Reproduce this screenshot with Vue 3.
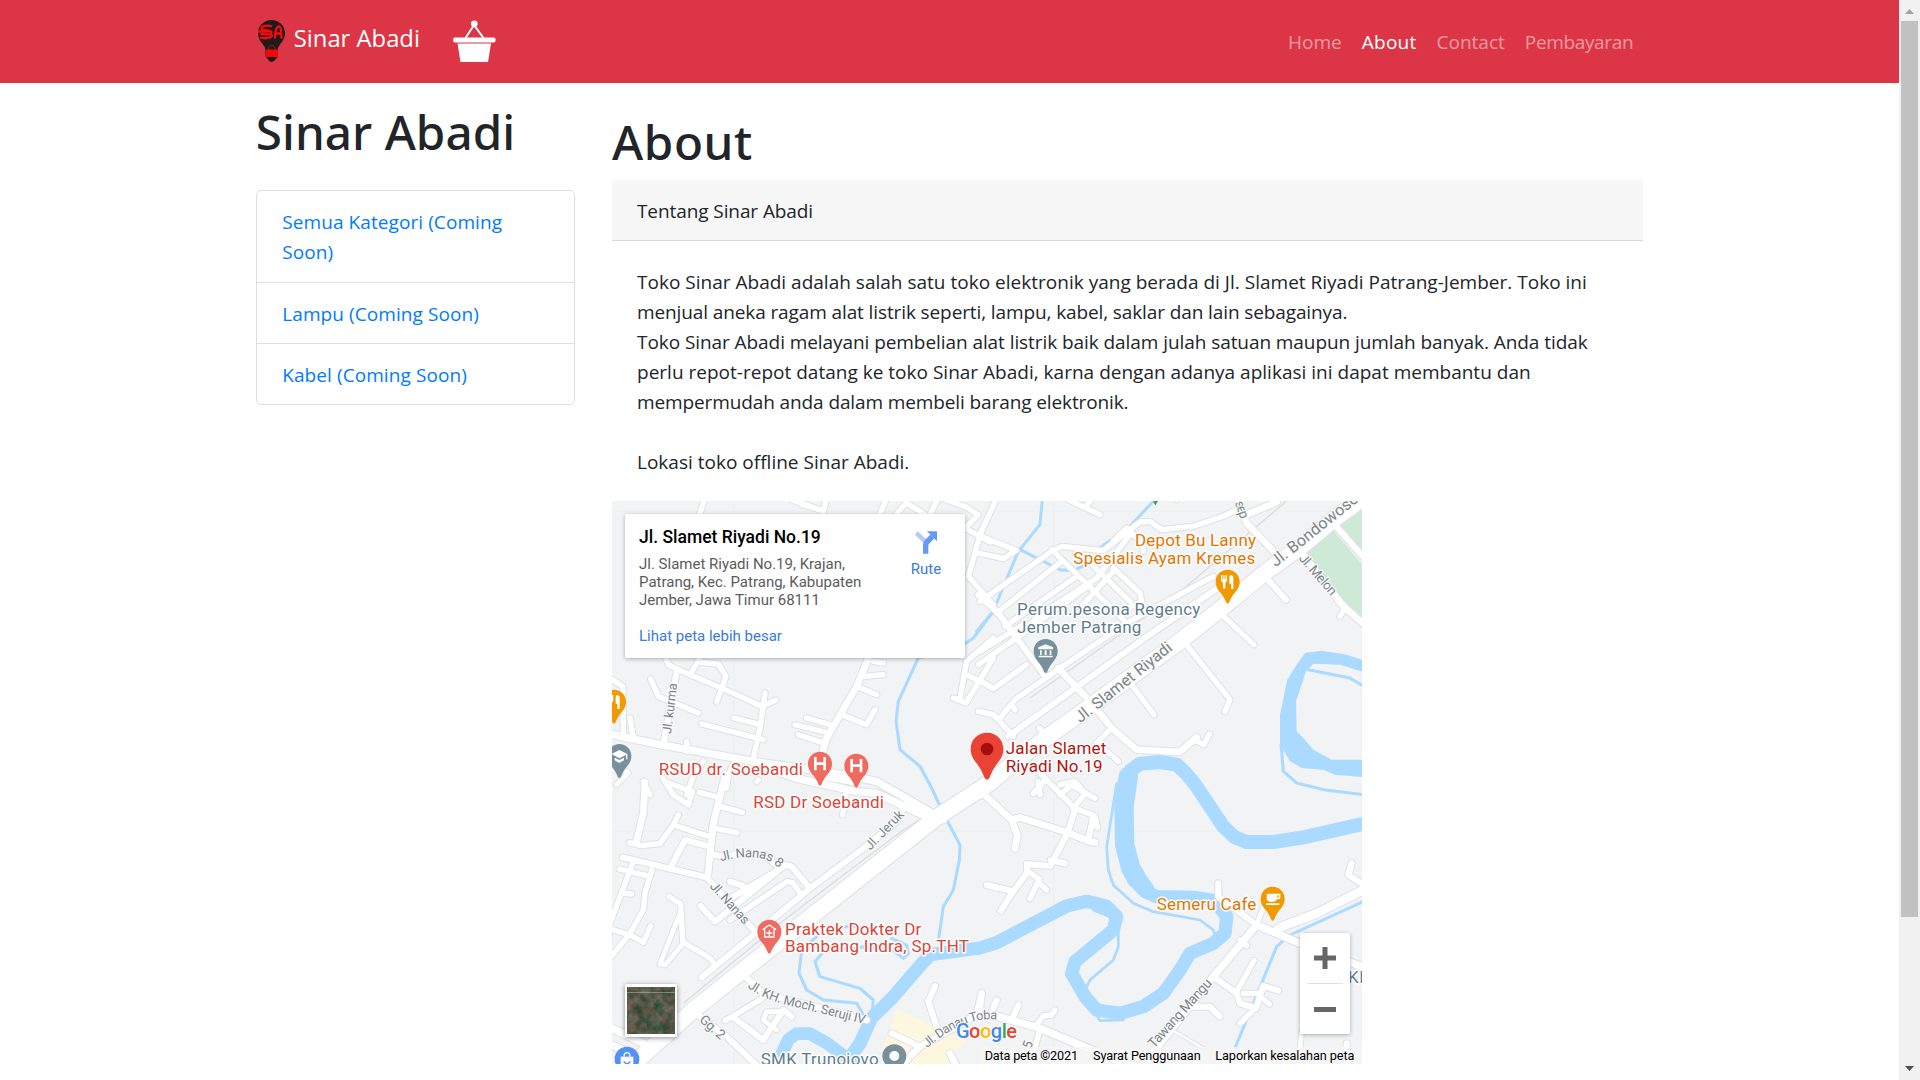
<script setup>
const categories = ['Semua Kategori (Coming Soon)', 'Lampu (Coming Soon)', 'Kabel (Coming Soon)']
const links = [
  { label: 'Home' },
  { label: 'About', active: true },
  { label: 'Contact' },
  { label: 'Pembayaran', tight: true }
]

// Streets are grouped by map tile; each entry is [width, path].
const tiles = [
  {
    x: 0, y: 0,
    roads: [
      [16, 'M285 0L262 70'], [16, 'M545 5L640 40L650 0'], [14, 'M560 5L575 20L640 38'], [16, 'M830 0L805 60'],
      [16, 'M900 0L850 60M890 15L960 60M985 0L960 50'], [16, 'M995 0L1070 28L1105 50L1065 90L1140 132'],
      [16, 'M1115 95L1075 235L1150 320'], [16, 'M165 475L175 500L205 515L380 590L455 625L497 607'],
      [16, 'M240 530L270 480M262 492L325 498L348 535L320 612'], [18, 'M200 520L160 740'],
      [16, 'M122 543L145 595L265 645'], [16, 'M465 585L450 690L428 790'], [16, 'M372 660L450 680M275 678L460 725'],
      [22, 'M-10 706L150 740L430 790L700 830L800 850L1000 965'], [16, 'M230 730L230 760M60 660L70 720'],
      [16, 'M0 540L38 565L40 700M-10 600L20 600'], [20, 'M775 480L755 530L740 565L650 720L630 790'],
      [16, 'M790 490L820 495M765 535L820 530M740 565L800 590'], [16, 'M695 650L770 680L795 635'],
      [16, 'M590 660L660 680M555 680L655 705M565 710L640 735'],
      [16, 'M1150 420L1070 490L1050 600M1070 530L1150 570M1150 480L1068 615L1030 600'],
      [16, 'M120 890L100 850M230 890L252 830L280 790M350 870L355 830L375 790'], [14, 'M20 800L55 825L20 860']
    ]
  },
  {
    x: 1110, y: 0,
    roads: [
      [48, 'M-5 880L190 725L310 640L600 430L740 318L860 220L960 148L1060 65L1175 -20'],
      [16, 'M50 0L0 110M-5 165L70 182L108 157L-5 112'], [16, 'M0 310L215 160L245 145L370 158L480 72L510 70L545 95L640 85L730 55L780 30'],
      [16, 'M50 345L245 190M75 385L290 235M-5 500L110 420L330 260M-5 545L40 572L140 500'], [16, 'M0 460L130 380'],
      [18, 'M-5 290L55 345L195 535'], [16, 'M215 155L430 365M290 155L450 310'], [16, 'M100 425L180 350L350 240L450 110M300 330L400 220'],
      [16, 'M400 210L480 285L485 310L415 345'], [16, 'M60 660L105 605L240 510L440 375L700 235'],
      [18, 'M85 715L300 560L480 430L725 262'], [16, 'M-5 640L40 650L100 715M95 620L105 635'],
      [20, 'M235 510L330 610L395 690L470 755L600 762L650 718'], [16, 'M640 725L672 740L688 708'],
      [16, 'M390 695L350 735L415 790'], [16, 'M178 690L210 725'], [16, 'M455 560L522 650'],
      [16, 'M615 435L750 605L735 640'], [16, 'M720 345L822 440'], [18, 'M850 230L918 305'],
      [20, 'M770 -5L800 75L895 175M945 140L1090 325L1170 395'], [16, 'M1095 330L1080 355'], [18, 'M1060 75L1170 200'],
      [20, 'M800 50L890 12'], [16, 'M265 5L360 50M340 -5L318 25M590 5L600 -5'], [16, 'M440 90L490 140L490 160M440 90L400 130'],
      [16, 'M180 890L175 850M240 860L285 850L310 880']
    ]
  },
  {
    x: 0, y: 846,
    roads: [
      [48, 'M1240 -75L1140 8L980 112L400 570L250 690L50 870'], [18, 'M275 592L430 465L600 325L760 205L860 125L885 75'],
      [22, 'M470 -35L560 -5L740 35L800 40L975 122'], [20, 'M640 -10L730 5'], [16, 'M710 30L698 105'],
      [20, 'M345 -10L310 130L293 290'], [16, 'M268 37L325 52M320 77L398 97M305 143L380 158'],
      [16, 'M205 105L190 135L300 170M190 135L150 190L95 197L58 188'], [20, 'M105 8L100 100L78 190'],
      [16, 'M160 -5L190 45L235 75L247 35L165 5'], [18, 'M38 232L290 292L440 460'],
      [18, 'M180 265L225 180L300 200M300 222L350 232L400 215L470 230L510 265'], [16, 'M28 267L110 287'],
      [16, 'M70 245L0 430L-10 560M125 270L105 340L100 390L60 460L-5 540M45 340L65 342M-5 445L60 465L100 487L122 438'],
      [16, 'M178 350L212 372L218 485L300 535L315 555'], [14, 'M212 395L150 552L165 555L220 490'],
      [18, 'M272 378L315 425L500 275M370 350L530 255L545 260L600 325M360 305L400 318'],
      [16, 'M360 420L530 305L548 308L575 345M490 415L600 325'], [18, 'M400 585L460 640L770 720'],
      [16, 'M345 722L450 660L470 640'], [18, 'M370 712L460 780L520 690L545 710'], [14, 'M515 695L470 695L460 720L500 750'],
      [18, 'M250 695L350 770L450 865'], [22, 'M-5 740L120 800M-5 790L60 820'], [20, 'M870 860L930 800L1110 700'],
      [18, 'M845 760L925 798'], [18, 'M975 618L955 665L980 740'], [18, 'M1115 640L1100 700'], [20, 'M1020 820L1045 870'],
      [16, 'M440 5L445 0M1130 315L1160 325']
    ]
  },
  {
    x: 1110, y: 846,
    roads: [
      [20, 'M0 32L95 120L112 165L105 205M95 120L118 112L255 155L330 185L345 187'],
      [16, 'M160 40L192 5M180 -20L285 85L345 108L352 142M240 45L275 15L345 55M280 85L312 45'],
      [18, 'M285 90L260 165L210 258L140 252M340 110L325 180M212 240L255 250'],
      [18, 'M142 255L140 280L92 345L62 393M20 315L92 332'], [16, 'M145 275L178 297L150 355M178 310L200 330'],
      [22, 'M50 708L180 745L360 820L480 870'], [18, 'M5 640L0 690M50 660L35 695M115 675L95 720'],
      [16, 'M165 740L190 708L215 705L225 690M178 755L150 860'], [22, 'M830 435L700 590L500 840'],
      [18, 'M715 310L715 350L830 435'], [22, 'M830 435L960 490L1160 565'], [14, 'M855 370L830 435'],
      [26, 'M885 455L905 440L1010 400L1160 325'], [18, 'M1115 250L1105 285L1160 320'], [16, 'M780 480L800 497'],
      [18, 'M700 590L770 640L780 670L828 685L850 618L895 632'], [16, 'M770 635L822 542M825 685L780 730M840 650L868 672M790 640L840 640'],
      [18, 'M640 680L690 680L720 710'], [7, 'M585 755L670 805'], [14, 'M965 755L955 860'], [18, 'M1100 790L1100 860']
    ]
  }
]

const rivers = [
  [9, 'M1150 340L1090 420L1060 440L925 480L865 610L858 670L870 755L930 805L965 870L1000 946L1050 1041L1048 1086L1030 1176L1000 1226L985 1330'],
  [9, 'M1297 5L1290 80L1225 160L1170 290L1150 340L1100 400M1230 155L1350 215L1390 218L1450 190M1625 15L1550 95L1460 155'],
  [9, 'M2095 515L2220 540L2270 570M2013 740L2020 820L2060 855L2140 875L2260 890'],
  [42, 'M2270 975L2170 998L2080 1018L1990 1032L1910 1032L1875 1018L1840 986L1800 926L1760 866L1730 828L1700 800L1650 792L1590 797L1562 818L1545 856'],
  [58, 'M1555 835L1542 926L1544 1040L1562 1110L1580 1140'],
  [48, 'M1562 1110L1610 1175'],
  [40, 'M1570 1145L1605 1180L1640 1196L1750 1198L1815 1208L1850 1256L1845 1306L1810 1336L1740 1366L1710 1416L1660 1486L1600 1526L1530 1546L1460 1536L1425 1496L1385 1426L1395 1391L1510 1296L1520 1256L1490 1225L1430 1210L1370 1224L1270 1276L1160 1334L1110 1350L960 1370L920 1415L850 1496L785 1560L750 1636L715 1685'],
  [38, 'M505 1690L535 1625L560 1607L600 1607L650 1635L710 1680L740 1700'],
  [9, 'M620 1316L575 1356L567 1426L590 1476L640 1506L740 1516L760 1550M895 1366L880 1381L850 1358L765 1346L640 1361L615 1391L630 1436L750 1471L790 1506L785 1560M845 1321L890 1341L895 1368M690 1286L740 1286M950 1390L1000 1375L1120 1360'],
  [9, 'M2265 1208L2040 1311L2000 1346L1930 1516L1875 1650'],
  [8, 'M1520 856L1490 1046L1495 1116L1510 1161L1570 1216L1630 1241L1770 1266L1810 1296L1818 1320'],
  [8, 'M1450 1236L1500 1256L1525 1286L1525 1346L1510 1386L1440 1446L1420 1486L1470 1568L1540 1566']
]

const labels = [
  { t: 'RSUD dr. Soebandi', x: 146, y: 832, w: 433, c: 'red' },
  { t: 'RSD Dr Soebandi', x: 430, y: 929, w: 392, c: 'red' },
  { t: 'Praktek Dokter Dr', x: 525, y: 1310, w: 409, c: 'red' },
  { t: 'Bambang Indra, Sp.THT', x: 525, y: 1363, w: 552, c: 'red' },
  { t: 'Jalan Slamet', x: 1187, y: 769, w: 302, c: 'dark' },
  { t: 'Riyadi No.19', x: 1187, y: 822, w: 291, c: 'dark' },
  { t: 'Depot Bu Lanny', x: 1575, y: 143, w: 363, c: 'orange' },
  { t: 'Spesialis Ayam Kremes', x: 1390, y: 197, w: 546, c: 'orange' },
  { t: 'Semeru Cafe', x: 1640, y: 1236, w: 299, c: 'orange' },
  { t: 'Perum.pesona Regency', x: 1221, y: 351, w: 550, c: 'slate' },
  { t: 'Jember Patrang', x: 1221, y: 404, w: 373, c: 'slate' },
  { t: 'SMK Trunojovo', x: 452, y: 1702, w: 354, c: 'slate' },
  { t: 'KN', x: 2214, y: 1456, w: 70, c: 'slate' }
]
const streets = [
  { t: 'Jl. kurma', x: 183, y: 708, w: 152, r: -83, s: 38 },
  { t: 'Jl. Slamet Riyadi', x: 1411, y: 676, w: 356, r: -38.5, s: 48 },
  { t: 'Jl. Bondowoso', x: 1997, y: 208, w: 322, r: -38.5, s: 48 },
  { t: 'Jl. Melon', x: 2065, y: 182, w: 150, r: 49, s: 40 },
  { t: 'sep', x: 1874, y: 14, w: 54, r: 70, s: 40 },
  { t: 'Jl. Jeruk', x: 781, y: 1058, w: 148, r: -46, s: 39 },
  { t: 'Jl. Nanas', x: 298, y: 1166, w: 155, r: 48, s: 39 },
  { t: 'Gg. 2', x: 266, y: 1568, w: 87, r: 42, s: 40 },
  { t: 'Tawang Mangu', x: 1632, y: 1652, w: 262, r: -48, s: 41 },
  { t: '5', x: 1262, y: 1655, w: 22, r: -70, s: 40 }
]
const curved = [
  { id: 'nanas8', t: 'Jl. Nanas 8', d: 'M332 1090Q420 1066 475 1088Q510 1105 530 1140', w: 185, s: 39 },
  { id: 'seruji', t: 'Jl. KH. Moch. Seruji IV', d: 'M412 1468Q470 1510 560 1528L764 1578', w: 370, s: 39 },
  { id: 'danau', t: 'Jl. Danau Toba', d: 'M952 1650Q1030 1582 1100 1568Q1140 1560 1165 1566L1190 1572', w: 232, s: 38 }
]
const pins = [
  { x: 630, y: 797, c: '#ef6a60', k: 'H' }, { x: 739, y: 803, c: '#ef6a60', k: 'H' },
  { x: 478, y: 1301, c: '#ef6a60', k: 'clinic' }, { x: 1853, y: 251, c: '#f29900', k: 'food' },
  { x: 12, y: 611, c: '#f29900', k: 'food' }, { x: 1988, y: 1202, c: '#f29900', k: 'cup' },
  { x: 1307, y: 459, c: '#78909c', k: 'bank' }, { x: 28, y: 774, c: '#78909c', k: 'school' }
]
</script>

<template>
  <div class="page">
    <div class="content">
      <header class="navbar">
        <div class="container nav-row">
          <div class="brand">
            <svg class="bulb" viewBox="0 0 27 42" width="27" height="42">
              <path fill="#1f1b1c" d="M13.500 0C21 0 27 5.800 27 13c0 5-2.500 8.500-5 11.500-1.500 2-2.300 3.500-2.500 6V37l-3 3.500-1.500 1.200h-3L10.500 40l-3-3.500v-6C7.300 28 6.500 26.500 5 24.500 2.500 21.500 0 18 0 13 0 5.800 6 0 13.500 0z" />
              <path fill="none" stroke="#f90909" stroke-width="2.300" d="M14 6.500C9 4.500 3 6 3.500 8.500S13 10 13.500 12c.3 2-3 3-11 2M0 11.500h10M2 17.500c6 1.500 12 .8 12-3M17 18.500c0-7 1-11.500 3.500-12 2.500-.5 2.700 4 3 12M17.500 13.500h6" />
              <path fill="none" stroke="#a21517" d="M10 30c1-6.500 6.500-6.500 7.500 0" />
              <path fill="#fd0303" d="M8.300 29.500h11l.7 7.500H7.700z" />
            </svg>
            <span>Sinar Abadi</span>
          </div>
          <svg class="basket" viewBox="0 0 43 42" width="43" height="42">
            <g fill="#fff">
              <circle cx="21.300" cy="3.800" r="3.300" />
              <rect x="0" y="17.500" width="42.500" height="5" rx="1.800" />
              <path d="M4.500 23.500h33.500L35 42h-27.500z" />
            </g>
            <path d="M12.500 18L21 5l9.500 13" fill="none" stroke="#fff" stroke-width="2" />
          </svg>
          <nav class="links">
            <a v-for="l in links" :key="l.label" :class="{ active: l.active, tight: l.tight }">{{ l.label }}</a>
          </nav>
        </div>
      </header>

      <div class="container columns">
        <aside class="sidebar">
          <h1>Sinar Abadi</h1>
          <ul class="categories">
            <li v-for="c in categories" :key="c"><a>{{ c }}</a></li>
          </ul>
        </aside>

        <main class="main">
          <h1>About</h1>
          <div class="card-header">Tentang Sinar Abadi</div>
          <div class="card-body">
            <span>Toko Sinar Abadi adalah salah satu toko elektronik yang berada di Jl. Slamet Riyadi Patrang-Jember. Toko ini</span>
            <span class="t2">menjual aneka ragam alat listrik seperti, lampu, kabel, saklar dan lain sebagainya.</span>
            <span class="t1">Toko Sinar Abadi melayani pembelian alat listrik baik dalam julah satuan maupun jumlah banyak. Anda tidak</span>
            <span>perlu repot-repot datang ke toko Sinar Abadi, karna dengan adanya aplikasi ini dapat membantu dan</span>
            <span class="t2">mempermudah anda dalam membeli barang elektronik.</span>
            <span class="gap">Lokasi toko offline Sinar Abadi.</span>
          </div>

          <div class="map">
            <svg class="canvas" viewBox="6 9 2250 1689" width="750" height="563">
              <rect x="0" y="0" width="2270" height="1710" fill="#f1f3f4" />
              <path d="M371 0V1700M1331 0V1700M0 40H2260M0 1000H2260" stroke="#eceeef" stroke-width="2" />
              <path fill="#ceead6" d="M2270 0L2245 10L2180 70L2270 185ZM2160 85L2070 155L2185 290L2270 375V215Z" />
              <path fill="#fef7e0" d="M860 1534L1070 1626L1010 1700H830L820 1646Z" />
              <path v-for="r in rivers" :key="r[1]" :d="r[1]" :stroke-width="r[0]" class="river" />
              <path fill="#aadaff" d="M2270 490L2210 470L2135 458L2085 465L2060 500L2032 545L2010 650L2010 740L2040 790L2075 810L2140 815L2175 830L2270 838V785H2165L2110 755L2080 720L2060 700L2058 610L2088 520L2110 497L2190 500L2270 525Z" />
              <g v-for="t in tiles" :key="'c' + t.x + t.y" :transform="`translate(${t.x} ${t.y})`" class="casing">
                <path v-for="r in t.roads" :key="r[1]" :d="r[1]" :stroke-width="r[0] + 6" />
              </g>
              <path d="M2040 0L1700 290L1260 600M1260 760L880 996L700 1131L510 1276L220 1516" fill="none" stroke="#dadce0" stroke-width="4" />
              <g v-for="t in tiles" :key="'f' + t.x + t.y" :transform="`translate(${t.x} ${t.y})`" class="road">
                <path v-for="r in t.roads" :key="r[1]" :d="r[1]" :stroke-width="r[0]" />
              </g>

              <g class="street">
                <text v-for="s in streets" :key="s.t" :transform="`translate(${s.x} ${s.y}) rotate(${s.r})`" :font-size="s.s" :textLength="s.w">{{ s.t }}</text>
                <template v-for="s in curved" :key="s.id">
                  <path :id="s.id" :d="s.d" fill="none" stroke="none" />
                  <text :font-size="s.s" :textLength="s.w"><textPath :href="'#' + s.id">{{ s.t }}</textPath></text>
                </template>
              </g>
              <text v-for="l in labels" :key="l.t" class="place" :class="l.c" :x="l.x" :y="l.y" :textLength="l.w">{{ l.t }}</text>

              <path fill="#34a853" d="M1622 0h28l-14 22z" />
              <g v-for="(p, i) in pins" :key="i" :transform="`translate(${p.x} ${p.y})`">
                <path :fill="p.c" d="M0 -36C20 -36 36 -20 36 0C36 16 28 25 20 35C12 46 8 53 5 62Q0 70 -5 62C-8 53 -12 46 -20 35C-28 25 -36 16 -36 0C-36 -20 -20 -36 0 -36Z" />
                <path v-if="p.k === 'H'" d="M-14 -20V20M14 -20V20M-14 0H14" stroke="#fff" stroke-width="8" fill="none" />
                <g v-else-if="p.k === 'clinic'" fill="none" stroke="#fff" stroke-width="4">
                  <path d="M-14 -7V16H14V-7M-20 -6L0 -20L20 -6" /><path d="M0 -5V13M-9 4H9" />
                </g>
                <g v-else-if="p.k === 'food'" fill="#fff">
                  <path d="M-20 -20h4v13h3v-13h4v13h3v-13h4v14q0 7-5 9v18h-7V3q-6-2-6-9zM8 -20q9 0 9 10v32h-7V6H5v-18q0-5 3-8z" />
                </g>
                <path v-else-if="p.k === 'cup'" fill="#fff" fill-rule="evenodd" d="M-18 -15H23V-3Q23 2 16 2H12Q10 9 3 9H-8Q-18 9 -18 -1ZM14 -10V-3H18V-10ZM-20 14H20V19H-20Z" />
                <path v-else-if="p.k === 'bank'" fill="#fff" d="M-22 -11L0 -20L22 -11V-5H-22ZM-17 -2h5V12h-5zM-3 -2h6V12h-6zM12 -2h5V12h-5zM-21 14H21v5H-21z" />
                <path v-else fill="#fff" d="M-24 -6L0 -18L24 -6V10H20V-3L0 7ZM-14 5L0 12L14 5V13L0 21L-14 13Z" />
              </g>
              <g>
                <path fill="#ea4335" d="M1131 704C1159 704 1180 725 1180 753C1180 777 1167 788 1155 806C1145 820 1142 832 1138 840Q1131 850 1124 840C1120 832 1117 820 1107 806C1095 788 1082 777 1082 753C1082 725 1103 704 1131 704Z" />
                <circle cx="1131" cy="753" r="19" fill="#a50e0e" />
              </g>
              <circle cx="853" cy="1675" r="36" fill="#78909c" />
              <circle cx="853" cy="1674" r="15" fill="#fff" />
              <circle cx="51" cy="1683" r="37" fill="#5491f5" />
              <path fill="#fff" d="M32 1676H70V1700H32Z" />
              <path d="M42 1676Q42 1664 51 1664Q60 1664 60 1676" fill="none" stroke="#fff" stroke-width="4" />
              <path d="M41 1690Q51 1704 61 1690" fill="none" stroke="#5491f5" stroke-width="4" />

              <text class="google" x="1038" y="1619" textLength="183"><tspan fill="#4285f4">G</tspan><tspan fill="#ea4335">o</tspan><tspan fill="#fbbc04">o</tspan><tspan fill="#4285f4">g</tspan><tspan fill="#34a853">l</tspan><tspan fill="#ea4335">e</tspan></text>
              <rect x="1108" y="1647" width="1160" height="60" fill="#f5f5f5" opacity=".75" />
              <g class="legal">
                <text x="1124" y="1685" textLength="280">Data peta ©2021</text>
                <text x="1449" y="1685" textLength="323">Syarat Penggunaan</text>
                <text x="1816" y="1685" textLength="417">Laporkan kesalahan peta</text>
              </g>
            </svg>

            <div class="info">
              <div class="info-text">
                <strong>Jl. Slamet Riyadi No.19</strong>
                <p>Jl. Slamet Riyadi No.19, Krajan,<br>Patrang, Kec. Patrang, Kabupaten<br>Jember, Jawa Timur 68111</p>
                <a>Lihat peta lebih besar</a>
              </div>
              <div class="route">
                <svg viewBox="0 0 66 68" width="22" height="23">
                  <path d="M4 5L32 33" stroke="#b5ccfb" stroke-width="14" />
                  <path d="M32 68V42Q32 36 37 31L52 16" fill="none" stroke="#6698fa" stroke-width="16" />
                  <path d="M36 0H66V30Z" fill="#6698fa" />
                </svg>
                <a>Rute</a>
              </div>
            </div>

            <div class="satellite">
              <svg width="48" height="47" viewBox="0 0 48 47">
                <defs>
                  <filter id="terrain" x="0" y="0" width="100%" height="100%" color-interpolation-filters="sRGB">
                    <feTurbulence type="fractalNoise" baseFrequency=".11" numOctaves="4" seed="7" />
                    <feColorMatrix values=".6 0 0 0 .02  .25 .15 0 0 .14  .3 .15 0 0 .05  0 0 0 0 1" />
                  </filter>
                </defs>
                <rect width="48" height="47" filter="url(#terrain)" />
                <path d="M0 5.500H48" stroke="#a9b0a8" stroke-width="1" opacity=".6" />
              </svg>
            </div>

            <div class="zoom">
              <svg width="50" height="50" viewBox="0 0 50 50"><path d="M14 25H36M25 14V36" stroke="#666" stroke-width="5" /></svg>
              <i />
              <svg width="50" height="50" viewBox="0 0 50 50"><path d="M14 25.500H36" stroke="#666" stroke-width="5" /></svg>
            </div>
          </div>
        </main>
      </div>
    </div>

    <div class="scrollbar">
      <svg width="21" height="21" viewBox="0 0 21 21"><path d="M6 14L10.500 9L15 14Z" fill="#a3a3a3" /></svg>
      <div class="thumb" />
      <svg class="down" width="21" height="21" viewBox="0 0 21 21"><path d="M6 7L10.500 12L15 7Z" fill="#505050" /></svg>
    </div>
  </div>
</template>

<style>
body { margin: 0; overflow: hidden; background: #fff; }
</style>

<style scoped>
.page { display: flex; width: 1920px; height: 1080px; overflow: hidden; font: 19px/30px "Open Sans", "Noto Sans", sans-serif; color: #212529; }
.content { width: 1899px; flex: none; }
.container { width: 1387.5px; margin: 0 auto; }
.navbar { height: 83px; background: #dc3545; }
.nav-row { display: flex; height: 83px; }
.brand { display: flex; width: 197px; box-sizing: border-box; padding: 20px 0 0 2px; color: #fff; font-size: 23.800px; line-height: 37px; }
.brand span { margin: 0 0 0 9px; white-space: nowrap; }
.basket { margin-top: 20px; flex: none; }
.links { display: flex; gap: 20px; margin: 27px 10px 0 auto; color: rgba(255, 255, 255, .5); }
.links .active { color: #fff; letter-spacing: .25px; }
.links .tight { letter-spacing: -.35px; }
h1 { margin: 0; font: 500 47.600px/60px "Noto Sans", "Open Sans", sans-serif; }
.columns { display: flex; gap: 37.500px; }
.sidebar { width: 318.750px; flex: none; }
.sidebar h1 { padding-top: 19px; letter-spacing: .05px; }
.categories { list-style: none; margin: 28px 0 0; padding: 0; border: 1px solid #dfdfdf; border-radius: 5px; }
.categories li { padding: 15.600px 25px 14.400px 25.500px; letter-spacing: .08px; color: #007bff; }
.categories li:first-child { padding-bottom: 15.400px; }
.categories li + li { border-top: 1px solid #dfdfdf; }
.main { width: 1031.250px; flex: none; }
.main h1 { padding-top: 29px; letter-spacing: .6px; }
.card-header { height: 61px; box-sizing: border-box; margin-top: 8px; padding: 15.600px 25px 0; line-height: 30px; background: #f7f7f7; border-bottom: 1px solid #d8d8d8; letter-spacing: -.09px; }
.card-body { padding: 26px 25px 24px; letter-spacing: .01px; }
.card-body span { display: block; white-space: nowrap; }
.card-body .t1 { letter-spacing: -.07px; }
.card-body .t2 { letter-spacing: -.11px; }
.card-body .gap { margin-top: 30px; }
.map { position: relative; width: 750px; height: 563px; overflow: hidden; font-family: Roboto, sans-serif; }
.canvas { display: block; }
.river { fill: none; stroke: #aadaff; stroke-linejoin: round; stroke-linecap: round; }
.casing path { fill: none; stroke: #dfe1e5; stroke-linecap: round; stroke-linejoin: round; }
.road path { fill: none; stroke: #fff; stroke-linecap: round; stroke-linejoin: round; }
.street text { fill: #7b8487; stroke: #f8f9fa; stroke-width: 7px; stroke-linejoin: round; paint-order: stroke; }
.place { font-size: 51px; stroke: #fff; stroke-width: 9px; stroke-linejoin: round; paint-order: stroke; }
.red { fill: #db4437; }
.dark { fill: #b31412; }
.orange { fill: #e37400; }
.slate { fill: #607d8b; }
.google { font-size: 60px; font-weight: 500; stroke: #fff; stroke-width: 6px; paint-order: stroke; }
.legal { font-size: 38px; fill: #000; }
.info { position: absolute; left: 13px; top: 13px; width: 340px; height: 144px; box-sizing: border-box; padding: 13px 14px; display: flex; justify-content: space-between; background: #fff; border-radius: 2px; box-shadow: 0 1px 4px rgba(0, 0, 0, .3); }
.info strong { display: block; font-size: 17.500px; line-height: 20px; font-weight: 500; color: #000; white-space: nowrap; }
.info p { margin: 8px 0 18px; font-size: 15px; line-height: 18px; color: #5b5b5b; white-space: nowrap; }
.info a { display: block; font-size: 15px; line-height: 18px; color: #3a7be0; }
.route { width: 50px; padding-top: 4px; text-align: center; }
.route svg { display: block; margin: 0 auto 6px; }
.satellite { position: absolute; left: 13px; top: 483px; border: 2px solid #fff; border-top-width: 3px; border-bottom-width: 3px; border-radius: 2px; box-shadow: 0 1px 5px rgba(0, 0, 0, .45); }
.satellite svg { display: block; }
.zoom { position: absolute; left: 688px; top: 432px; width: 50px; height: 101px; background: #fff; border-radius: 2px; box-shadow: 0 1px 4px rgba(0, 0, 0, .3); }
.zoom svg { display: block; }
.zoom i { display: block; height: 1px; margin: 0 7px; background: #e0e0e0; }
.scrollbar { width: 21px; height: 1080px; flex: none; display: flex; flex-direction: column; background: #f1f1f1; }
.scrollbar svg { display: block; flex: none; }
.thumb { width: 17px; height: 896px; margin-left: 2px; background: #c1c1c1; }
.scrollbar .down { margin-top: auto; }
</style>
